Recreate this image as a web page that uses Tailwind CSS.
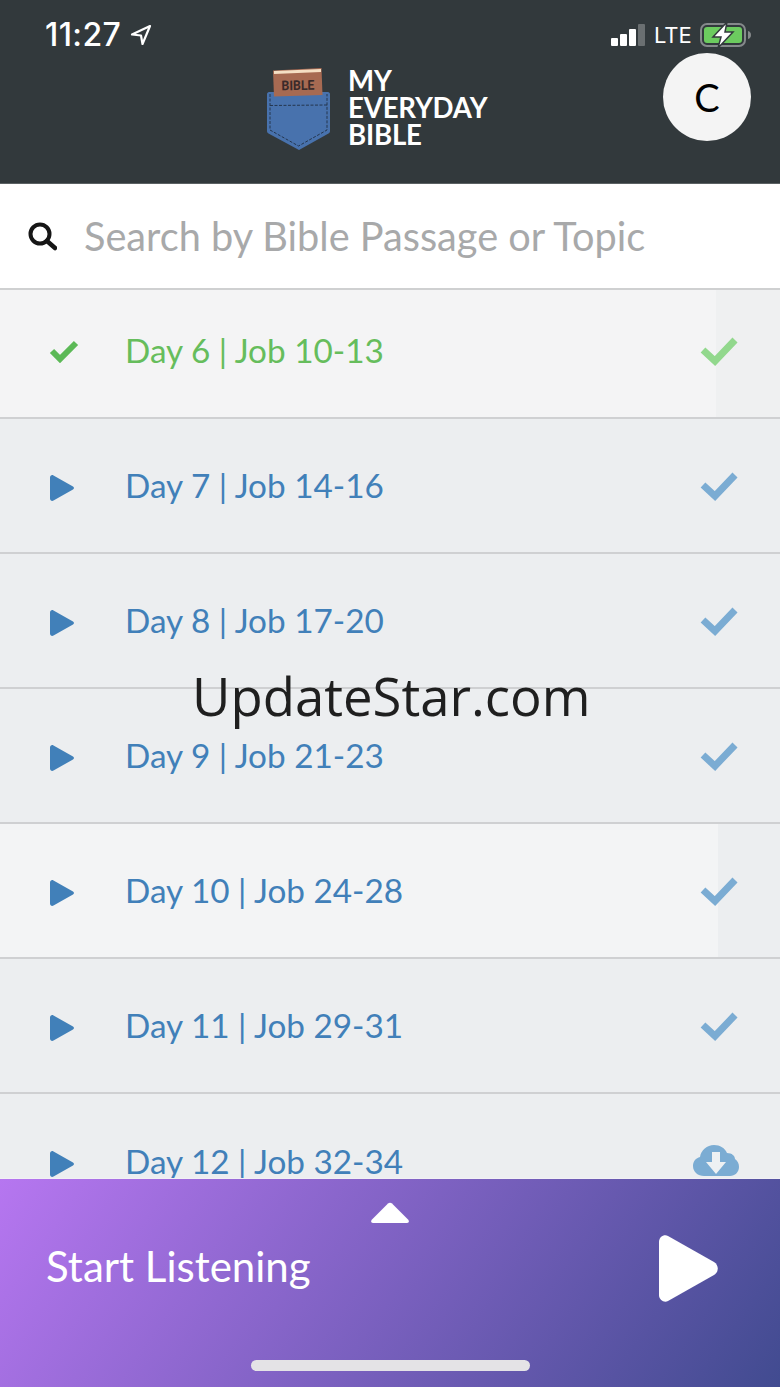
<!DOCTYPE html>
<html>
    <head>
        <meta charset="UTF-8" />
        <meta name="viewport" content="width=device-width, initial-scale=1.0" />
        <title>my everyday bible</title>
        <script src="https://cdn.jsdelivr.net/npm/@tailwindcss/browser@4"></script>
    </head>
    <body class="relative w-[780px] h-[1387px] overflow-hidden flex flex-col bg-[#eceef0] font-['Lato','Noto_Sans',sans-serif]">
        <!-- top bar -->
        <header class="relative h-[184px] shrink-0 bg-[#32393c] border-b border-[#5b6163]">
            <div class="absolute left-[45px] top-[17px] flex items-center gap-[9px] text-white">
                <span class="text-[32px] leading-[36px] tracking-[0.4px] font-['Inter',sans-serif] font-medium">11:27</span>
                <svg width="22" height="22" viewBox="0 0 22 22" fill="none" stroke="#fff" stroke-width="2.2" stroke-linejoin="round"><path d="M20 2 2 10.500l9 1 1.500 8.500z" /></svg>
            </div>
            <div class="absolute left-[611px] top-[22px] flex items-center">
                <div class="flex items-end gap-[2px] h-[22px]">
                    <div class="w-[7px] h-[8px] rounded-[1px] bg-white"></div>
                    <div class="w-[7px] h-[12px] rounded-[1px] bg-white"></div>
                    <div class="w-[7px] h-[17px] rounded-[1px] bg-white"></div>
                    <div class="w-[7px] h-[22px] rounded-[1px] bg-[#6a6f71]"></div>
                </div>
                <span class="ml-[9px] text-[22px] leading-[26px] text-white font-['Inter',sans-serif]">LTE</span>
                <svg class="ml-[8px]" width="52" height="26" viewBox="0 0 52 26">
                    <rect x="1" y="2" width="44" height="22" rx="6" fill="none" stroke="#85898b" stroke-width="2" />
                    <rect x="4" y="5" width="38" height="16" rx="3" fill="#6ccb5f" />
                    <path d="M48 9c2 .5 3 2 3 4s-1 3.500-3 4z" fill="#85898b" />
                    <path d="M27 0 13 15h8l-3 11 15-16h-8z" fill="#fff" stroke="#32393c" stroke-width="1.500" />
                </svg>
            </div>
            <!-- logo -->
            <div class="absolute left-[267px] top-[67px] flex">
                <svg width="64" height="84" viewBox="0 0 64 84">
                    <path d="M0 27c0-1 1-2 2-2h59c1 0 2 1 2 2v37c0 1-.5 2-1.500 2.500L32 83 1.500 66.500C.5 66 0 65 0 64z" fill="#4872ad" />
                    <path d="M3 38.500 60 38" stroke="#24364f" stroke-width="1" stroke-dasharray="3 1.500" fill="none" />
                    <path d="M3 27V63L31.500 79 60 63V27" stroke="#24364f" stroke-width="1" stroke-dasharray="3 1.500" fill="none" />
                    <path d="M6 3.500 54.500 1 55.500 28 7 29.500z" fill="#a76a52" />
                    <path d="M7 4 54 2 54 5 7 7z" fill="#f5dfc4" />
                    <text x="31" y="23" text-anchor="middle" font-family="Roboto, sans-serif" font-weight="700" font-size="13.500" textLength="33" lengthAdjust="spacingAndGlyphs" fill="#3a2a2a" transform="rotate(-1 31 19)">BIBLE</text>
                </svg>
                <div class="ml-[18px] -translate-x-px text-[27.600px] leading-[27px] font-bold text-white tracking-[-0.2px]">MY<br />EVERYDAY<br />BIBLE</div>
            </div>
            <div class="absolute left-[663px] top-[53px] w-[88px] h-[88px] rounded-full bg-[#f4f4f4] flex items-center justify-center text-[38px] text-black">C</div>
        </header>

        <!-- search -->
        <div class="h-[106px] shrink-0 bg-white border-b-2 border-[#cfd0d1] flex items-center pl-[27px]">
            <svg width="30" height="30" viewBox="0 0 30 30" fill="none" stroke="#161616"><circle cx="13" cy="13" r="9.500" stroke-width="4" /><path d="m20 20 8 7" stroke-width="4.500" stroke-linecap="round" /></svg>
            <span class="ml-[27px] text-[39.700px] leading-none text-[#a8a9aa]">Search by Bible Passage or Topic</span>
        </div>

        <!-- day list -->
        <main class="flex-1 min-h-0 overflow-hidden">
            <div class="relative h-[129px] pb-[6px] bg-[#f4f4f5] border-b-2 border-[#cfd0d2] flex items-center text-[#66bd5c]">
                <div class="absolute right-0 top-0 bottom-0 w-[64px] bg-[#eff0f1]"></div>
                <div class="relative w-[125px] pl-[49px]">
                    <svg width="30" height="24" viewBox="0 0 30 24" fill="none" stroke="#5cb957" stroke-width="6"><path d="m3 12 8 8L27 4" /></svg>
                </div>
                <span class="relative flex-1 text-[33.300px] leading-none">Day 6 | Job 10-13</span>
                <svg class="relative mr-[42px]" width="38" height="30" viewBox="0 0 38 30" fill="none" stroke="#92d88d" stroke-width="7"><path d="m3 14 12 11L35 4" /></svg>
            </div>

            <div class="h-[135px] bg-[#eceef0] border-b-2 border-[#cfd0d2] flex items-center text-[#4180b9]">
                <div class="w-[125px] pl-[50px] pt-[5px]">
                    <svg width="24" height="26" viewBox="0 0 24 26" fill="#4180b9"><path d="M0 2.500C0 .5 2-.5 3.500.5L23 11.500c1.300.8 1.300 2.200 0 3L3.500 25.500C2 26.500 0 25.500 0 23.500z" /></svg>
                </div>
                <span class="flex-1 text-[33.300px] leading-none">Day 7 | Job 14-16</span>
                <svg class="mr-[42px]" width="38" height="30" viewBox="0 0 38 30" fill="none" stroke="#7bacd3" stroke-width="7"><path d="m3 14 12 11L35 4" /></svg>
            </div>

            <div class="h-[135px] bg-[#eceef0] border-b-2 border-[#cfd0d2] flex items-center text-[#4180b9]">
                <div class="w-[125px] pl-[50px] pt-[5px]">
                    <svg width="24" height="26" viewBox="0 0 24 26" fill="#4180b9"><path d="M0 2.500C0 .5 2-.5 3.500.5L23 11.500c1.300.8 1.300 2.200 0 3L3.500 25.500C2 26.500 0 25.500 0 23.500z" /></svg>
                </div>
                <span class="flex-1 text-[33.300px] leading-none">Day 8 | Job 17-20</span>
                <svg class="mr-[42px]" width="38" height="30" viewBox="0 0 38 30" fill="none" stroke="#7bacd3" stroke-width="7"><path d="m3 14 12 11L35 4" /></svg>
            </div>

            <div class="h-[135px] bg-[#eceef0] border-b-2 border-[#cfd0d2] flex items-center text-[#4180b9]">
                <div class="w-[125px] pl-[50px] pt-[5px]">
                    <svg width="24" height="26" viewBox="0 0 24 26" fill="#4180b9"><path d="M0 2.500C0 .5 2-.5 3.500.5L23 11.500c1.300.8 1.300 2.200 0 3L3.500 25.500C2 26.500 0 25.500 0 23.500z" /></svg>
                </div>
                <span class="flex-1 text-[33.300px] leading-none">Day 9 | Job 21-23</span>
                <svg class="mr-[42px]" width="38" height="30" viewBox="0 0 38 30" fill="none" stroke="#7bacd3" stroke-width="7"><path d="m3 14 12 11L35 4" /></svg>
            </div>

            <div class="relative h-[135px] bg-[#f3f4f5] border-b-2 border-[#cfd0d2] flex items-center text-[#4180b9]">
                <div class="absolute right-0 top-0 bottom-0 w-[62px] bg-[#eceef0]"></div>
                <div class="relative w-[125px] pl-[50px] pt-[5px]">
                    <svg width="24" height="26" viewBox="0 0 24 26" fill="#4180b9"><path d="M0 2.500C0 .5 2-.5 3.500.5L23 11.500c1.300.8 1.300 2.200 0 3L3.500 25.500C2 26.500 0 25.500 0 23.500z" /></svg>
                </div>
                <span class="relative flex-1 text-[33.300px] leading-none">Day 10 | Job 24-28</span>
                <svg class="relative mr-[42px]" width="38" height="30" viewBox="0 0 38 30" fill="none" stroke="#7bacd3" stroke-width="7"><path d="m3 14 12 11L35 4" /></svg>
            </div>

            <div class="h-[135px] bg-[#eceef0] border-b-2 border-[#cfd0d2] flex items-center text-[#4180b9]">
                <div class="w-[125px] pl-[50px] pt-[5px]">
                    <svg width="24" height="26" viewBox="0 0 24 26" fill="#4180b9"><path d="M0 2.500C0 .5 2-.5 3.500.5L23 11.500c1.300.8 1.300 2.200 0 3L3.500 25.500C2 26.500 0 25.500 0 23.500z" /></svg>
                </div>
                <span class="flex-1 text-[33.300px] leading-none">Day 11 | Job 29-31</span>
                <svg class="mr-[42px]" width="38" height="30" viewBox="0 0 38 30" fill="none" stroke="#7bacd3" stroke-width="7"><path d="m3 14 12 11L35 4" /></svg>
            </div>

            <div class="h-[135px] bg-[#eceef0] flex items-center text-[#4180b9]">
                <div class="w-[125px] pl-[50px] pt-[5px]">
                    <svg width="24" height="26" viewBox="0 0 24 26" fill="#4180b9"><path d="M0 2.500C0 .5 2-.5 3.500.5L23 11.500c1.300.8 1.300 2.200 0 3L3.500 25.500C2 26.500 0 25.500 0 23.500z" /></svg>
                </div>
                <span class="flex-1 text-[33.300px] leading-none">Day 12 | Job 32-34</span>
                <svg class="mr-[41px]" width="46" height="36" viewBox="0 0 46 36">
                    <path d="M11 32C5 32 0 28 0 22c0-5 3-8 7-9C8 6 14 1 21 1c6 0 11 3 13 8 5 0 8 3 8 6 3 2 4 5 4 8 0 5-4 9-9 9z" fill="#7bacd3" />
                    <path d="M19 8h8v10h6L23 30 13 18h6z" fill="#eef1f3" />
                </svg>
            </div>
        </main>

        <!-- player -->
        <footer class="relative h-[209px] shrink-0 bg-linear-[125deg] from-[#b676f0] to-[#414b90] border-t border-[#f2f0f5]">
            <svg class="absolute left-[371px] top-[23px]" width="38" height="22" viewBox="0 0 38 22" fill="#fff"><path d="M17 1.500c1-1 3-1 4 0l16 16c1.500 1.500 1 3.500-1 3.500H2c-2 0-2.500-2-1-3.500z" /></svg>
            <span class="absolute left-[46px] top-[62px] text-[42px] leading-[50px] text-white">Start Listening</span>
            <svg class="absolute left-[659px] top-[56px]" width="60" height="68" viewBox="0 0 60 68" fill="#fff"><path d="M0 7c0-5 5-8 9-6l46 26c5 3 5 10 0 13L9 66c-4 2-9-1-9-6z" /></svg>
            <div class="absolute left-[251px] top-[181px] w-[279px] h-[11px] rounded-full bg-[#e4e3e6]"></div>
        </footer>

        <!-- watermark -->
        <div class="absolute left-[192px] top-[659px] text-[52.700px] leading-[74px] text-[#1f1f1f] font-['Open_Sans',sans-serif] whitespace-nowrap">UpdateStar.com</div>
    </body>
</html>
